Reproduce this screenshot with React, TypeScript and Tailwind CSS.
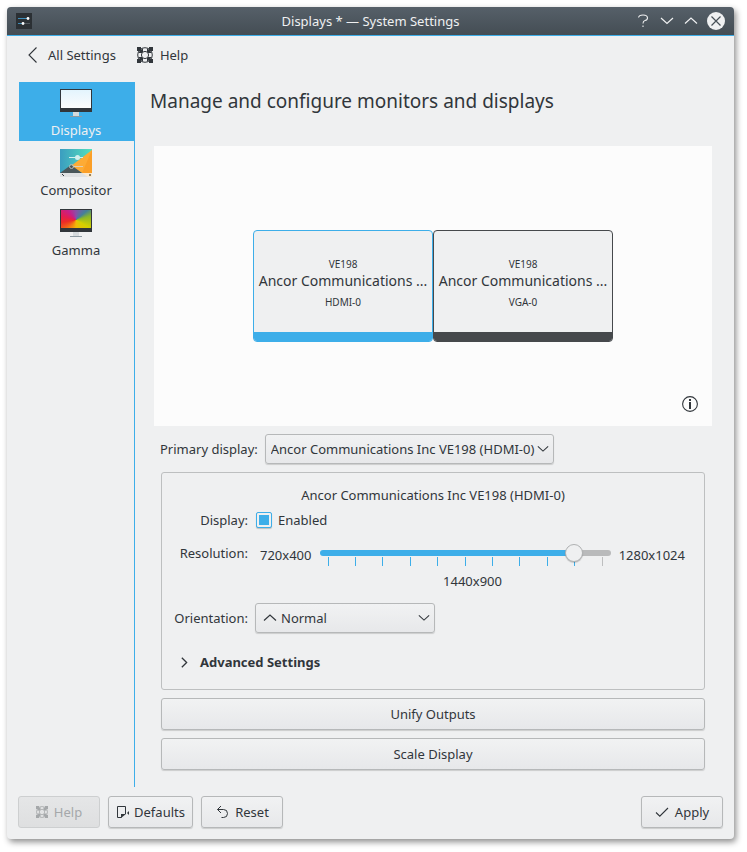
import { useState, type CSSProperties, type ReactNode } from 'react';

type IconProps = {
  className?: string;
};

const chevronPaths = {
  up: 'M1 9.5 L7 4 L13 9.5',
  down: 'M1 4 L7 9.5 L13 4',
  right: 'M4.5 2.5 L9 7 L4.5 11.5',
};

function Chevron({ direction, className }: IconProps & { direction: keyof typeof chevronPaths }) {
  return (
    <svg viewBox="0 0 14 14" fill="none" stroke="currentColor" strokeWidth="1.2" className={className} aria-hidden="true">
      <path d={chevronPaths[direction]} />
    </svg>
  );
}

function BackIcon() {
  return (
    <svg viewBox="0 0 16 16" fill="none" stroke="currentColor" strokeWidth="1.1" className="size-4" aria-hidden="true">
      <path d="M11.5 0.5 L4 8 L11.5 15.5" />
    </svg>
  );
}

function LifebuoyIcon({ className }: IconProps) {
  return (
    <svg viewBox="0 0 16 16" fill="none" stroke="currentColor" className={className} aria-hidden="true">
      <circle cx="8" cy="8" r="7.3" />
      <circle cx="8" cy="8" r="3.6" />
      <path d="M5.5 1.5 V5 M10.5 1.5 V5 M5.5 11 V14.5 M10.5 11 V14.5 M1.5 5.5 H5 M1.5 10.5 H5 M11 5.5 H14.5 M11 10.5 H14.5" />
      <path
        d="M0 0 H4 V2 L5.5 3 V5.5 H3 L2 4 H0 Z M16 0 H12 V2 L10.5 3 V5.5 H13 L14 4 H16 Z M0 16 H4 V14 L5.5 13 V10.5 H3 L2 12 H0 Z M16 16 H12 V14 L10.5 13 V10.5 H13 L14 12 H16 Z"
        fill="currentColor"
        stroke="none"
      />
    </svg>
  );
}

function AppIcon() {
  return (
    <svg viewBox="0 0 16 16" className="size-4" aria-hidden="true">
      <rect width="16" height="16" fill="#2b3034" />
      <path d="M2 5.5 H12" stroke="#3f8fba" />
      <path d="M2 10.5 H7" stroke="#3f8fba" />
      <path d="M7 10.5 H14" stroke="#50585e" />
      <circle cx="12" cy="5.5" r="1.4" fill="#fcfcfc" />
      <circle cx="7" cy="10.5" r="1.4" fill="#fcfcfc" />
    </svg>
  );
}

function MonitorIcon() {
  return (
    <svg viewBox="0 0 32 32" className="size-8" aria-hidden="true">
      <defs>
        <linearGradient id="screen" x1="0" y1="0" x2="0" y2="1">
          <stop offset="0" stopColor="#e3f4fd" />
          <stop offset="1" stopColor="#fcfcfc" />
        </linearGradient>
      </defs>
      <rect y="3" width="32" height="23" fill="#31363b" />
      <rect x="1" y="4" width="30" height="18" fill="url(#screen)" />
      <rect x="13" y="26" width="6" height="4" fill="#d5dadd" />
      <rect x="10" y="30" width="12" height="1" fill="#8d9aa2" />
    </svg>
  );
}

function CompositorIcon() {
  return (
    <svg viewBox="0 0 32 32" className="size-8" aria-hidden="true">
      <defs>
        <linearGradient id="teal" x1="0" y1="0" x2="1" y2="0">
          <stop offset="0" stopColor="#3b9dc0" />
          <stop offset="1" stopColor="#53e0bd" />
        </linearGradient>
      </defs>
      <rect y="3" width="32" height="24" fill="url(#teal)" />
      <path d="M32 4 L11 20 L22 27 H32 Z" fill="#fdab35" />
      <path d="M32 4 L22 27 H32 Z" fill="#fb9f27" />
      <path d="M0 27 L11 19 L22 27 Z" fill="#4a575b" />
      <rect y="27" width="32" height="4" fill="#dfe1e3" />
      <path d="M22 27 H32 V31 H28 Z" fill="#fbe9d0" />
      <path d="M2 28 L4 30" stroke="#31363b" />
      <rect x="29" y="28" width="2" height="2" fill="#8f8265" />
      <path d="M9 11.5 H23" stroke="#d3f0ee" />
      <circle cx="17.5" cy="11.5" r="2.5" fill="#d3f0ee" />
      <path d="M13 20.5 H23" stroke="#dfcfb6" />
      <circle cx="11.5" cy="20.5" r="2" fill="none" stroke="#b6bcb8" />
    </svg>
  );
}

function GammaIcon() {
  return (
    <svg viewBox="0 0 32 32" className="size-8" aria-hidden="true">
      <rect y="3" width="32" height="23" fill="#31363b" />
      <foreignObject x="1" y="4" width="30" height="18">
        <div className="h-[18px] w-[30px] bg-[conic-gradient(from_0deg_at_50%_55%,#8a4fa8,#447f9a_50deg,#8ab62b_75deg,#d4cf00_120deg,#f1ba08_180deg,#f37d12_220deg,#ec2c26_260deg,#e51c50_285deg,#c4208c_320deg,#8a4fa8)]" />
      </foreignObject>
      <rect x="13" y="26" width="6" height="4" fill="#d5dadd" />
      <rect x="10" y="30" width="12" height="1" fill="#8d9aa2" />
    </svg>
  );
}

function InfoIcon() {
  return (
    <svg viewBox="0 0 16 16" className="size-4" aria-hidden="true">
      <circle cx="8" cy="8" r="7.4" fill="none" stroke="currentColor" strokeWidth="1.1" />
      <rect x="7" y="3" width="2" height="2" fill="currentColor" />
      <rect x="7" y="6" width="2" height="7" fill="currentColor" />
    </svg>
  );
}

function DefaultsIcon() {
  return (
    <svg viewBox="0 0 14 14" fill="none" stroke="currentColor" className="size-3.5" aria-hidden="true">
      <path d="M5.5 12.5 H1.5 V1.5 H9.5 V9" />
      <path d="M5 13 V9 H10 Z" fill="currentColor" stroke="none" />
      <path d="M13 6 V10 L11 8 Z" fill="currentColor" stroke="none" />
    </svg>
  );
}

function ResetIcon() {
  return (
    <svg viewBox="0 0 14 14" fill="none" stroke="currentColor" className="size-3.5" aria-hidden="true">
      <path d="M6 1 L2.5 4.5 L6 8" />
      <path d="M2.5 4.5 H8.5 A4 4 0 0 1 8.5 12.5 H6.5" />
    </svg>
  );
}

function CheckIcon() {
  return (
    <svg viewBox="0 0 14 14" fill="none" stroke="currentColor" strokeWidth="1.1" className="size-3.5" aria-hidden="true">
      <path d="M1 7.5 L4.8 11.2 L13 3" />
    </svg>
  );
}

type PushButtonProps = {
  children: ReactNode;
  className?: string;
  disabled?: boolean;
};

function PushButton({ children, className = '', disabled }: PushButtonProps) {
  return (
    <button
      type="button"
      disabled={disabled}
      className={`flex h-8 items-center justify-center rounded-[3px] border border-[#b6b8b9] bg-linear-to-b from-[#f1f2f3] to-[#e7e8ea] shadow-[0_1px_1px_rgba(0,0,0,0.15)] disabled:border-[#cdcfd0] disabled:from-[#e5e6e7] disabled:to-[#dedfe0] disabled:text-[#a5a8aa] disabled:shadow-none ${className}`}
    >
      {children}
    </button>
  );
}

const selectClass =
  'h-[30px] w-full appearance-none rounded-[3px] border border-[#b6b8b9] bg-linear-to-b from-[#f1f2f3] to-[#e7e8ea] shadow-[0_1px_1px_rgba(0,0,0,0.15)]';

const modules = [
  { name: 'Displays', icon: <MonitorIcon /> },
  { name: 'Compositor', icon: <CompositorIcon /> },
  { name: 'Gamma', icon: <GammaIcon /> },
];

const outputs = [
  { model: 'VE198', vendor: 'Ancor Communications ...', port: 'HDMI-0', style: 'border-[#3daee9]', base: 'bg-[#3daee9]' },
  { model: 'VE198', vendor: 'Ancor Communications ...', port: 'VGA-0', style: 'border-[#46494c]', base: 'bg-[#46494c]' },
];

const resolutionSteps = 10;

function TitleBar() {
  return (
    <header className="grid h-[29px] grid-cols-[1fr_auto_1fr] items-center border-b border-[#3daee9] bg-linear-to-b from-[#566069] to-[#444d54] px-[9px] text-[#eff0f1]">
      <AppIcon />
      <h1>Displays * — System Settings</h1>
      <div className="flex items-center justify-end gap-2">
        <button type="button" aria-label="What's this" className="flex size-4 items-center justify-center">
          <svg viewBox="0 0 14 14" fill="none" stroke="currentColor" strokeWidth="1.1" className="size-3.5">
            <path d="M2.5 3.5 Q3 1 7 1 Q11.5 1 11.5 4 Q11.5 6 9 6.5 Q7 7 7 9.5 M7 11.5 V13" />
          </svg>
        </button>
        <button type="button" aria-label="Minimize" className="flex size-4 items-center justify-center">
          <Chevron direction="down" className="size-3.5" />
        </button>
        <button type="button" aria-label="Maximize" className="flex size-4 items-center justify-center">
          <Chevron direction="up" className="size-3.5" />
        </button>
        <button type="button" aria-label="Close" className="flex size-[18px] items-center justify-center rounded-full bg-[#eff0f1] text-[#475057]">
          <svg viewBox="0 0 10 10" fill="none" stroke="currentColor" strokeWidth="1.2" className="size-2.5">
            <path d="M0.5 0.5 L9.5 9.5 M9.5 0.5 L0.5 9.5" />
          </svg>
        </button>
      </div>
    </header>
  );
}

function Sidebar() {
  return (
    <nav className="w-[116px] shrink-0 border-r border-[#3daee9]">
      {modules.map((module, index) => (
        <a
          key={module.name}
          href="#"
          className={`mb-px flex h-[59px] flex-col items-center pt-1 pr-px ${index === 0 ? 'bg-[#3daee9] text-[#eff0f1]' : ''}`}
        >
          {module.icon}
          <span className="mt-0.5">{module.name}</span>
        </a>
      ))}
    </nav>
  );
}

function OutputPreview() {
  return (
    <div className="relative flex h-[280px] items-center justify-center bg-[#fcfcfc]">
      {outputs.map((output) => (
        <div key={output.port} className={`flex h-28 w-[180px] flex-col overflow-hidden rounded-[4px] border bg-[#eff0f1] text-center ${output.style}`}>
          <div className="flex flex-1 flex-col justify-center pt-0.5">
            <p className="text-[10px] leading-4">{output.model}</p>
            <p className="text-[14px] leading-[18px] whitespace-nowrap">{output.vendor}</p>
            <p className="mt-1 text-[10px] leading-4">{output.port}</p>
          </div>
          <div className={`h-[9px] ${output.base}`} />
        </div>
      ))}
      <button type="button" aria-label="Identify outputs" className="absolute right-[14px] bottom-[14px]">
        <InfoIcon />
      </button>
    </div>
  );
}

function ResolutionSlider() {
  const [step, setStep] = useState(9);

  return (
    <div className="relative h-[18px] flex-1">
      <div className="absolute inset-x-2 top-[13px] flex justify-between">
        {Array.from({ length: resolutionSteps + 1 }, (_, index) => (
          <span key={index} className={`h-[9px] w-px ${index <= step ? 'bg-[#3daee9]' : 'bg-[#bdbebf]'}`} />
        ))}
      </div>
      <input
        id="resolution"
        type="range"
        min={0}
        max={resolutionSteps}
        value={step}
        onChange={(event) => setStep(Number(event.target.value))}
        style={{ '--fill': `${(step / resolutionSteps) * 100}%` } as CSSProperties}
        className="relative block h-[18px] w-full appearance-none bg-transparent [&::-webkit-slider-runnable-track]:h-[6px] [&::-webkit-slider-runnable-track]:rounded-full [&::-webkit-slider-runnable-track]:bg-[linear-gradient(to_right,#3daee9_var(--fill),#b9babb_var(--fill))] [&::-webkit-slider-thumb]:-mt-[6px] [&::-webkit-slider-thumb]:size-[18px] [&::-webkit-slider-thumb]:appearance-none [&::-webkit-slider-thumb]:rounded-full [&::-webkit-slider-thumb]:border [&::-webkit-slider-thumb]:border-[#b0b2b3] [&::-webkit-slider-thumb]:bg-[#eff0f1] [&::-webkit-slider-thumb]:shadow-[0_1px_1px_rgba(0,0,0,0.2)]"
      />
    </div>
  );
}

function OutputSettings() {
  return (
    <section className="rounded-[3px] border border-[#bdbfc0] pt-3 pr-[19px] pb-[17px]">
      <h3 className="pl-[19px] text-center">Ancor Communications Inc VE198 (HDMI-0)</h3>
      <div className="grid grid-cols-[86px_1fr] gap-x-[7px]">
        <label htmlFor="enabled" className="flex h-[30px] items-center justify-end">Display:</label>
        <div className="flex items-center gap-1.5 pl-px">
          <input
            id="enabled"
            type="checkbox"
            defaultChecked
            className="size-4 appearance-none rounded-[2px] border border-[#3daee9] p-0.5 shadow-[0_1px_1px_rgba(0,0,0,0.2)] checked:bg-[#3daee9] checked:bg-clip-content"
          />
          <label htmlFor="enabled">Enabled</label>
        </div>

        <label htmlFor="resolution" className="flex h-9 items-center justify-end">Resolution:</label>
        <div className="flex items-center gap-2 pl-[5px]">
          <span className="pt-1">720x400</span>
          <ResolutionSlider />
          <span className="pt-1">1280x1024</span>
        </div>
        <output htmlFor="resolution" className="col-start-2 pl-[5px] text-center">1440x900</output>

        <label htmlFor="orientation" className="mt-3 flex h-[30px] items-center justify-end">Orientation:</label>
        <div className="relative mt-3 w-[180px]">
          <select id="orientation" className={`${selectClass} pr-6 pl-[25px]`}>
            <option>Normal</option>
          </select>
          <Chevron direction="up" className="pointer-events-none absolute top-2 left-2 size-3.5" />
          <Chevron direction="down" className="pointer-events-none absolute top-[9px] right-[5px] size-3" />
        </div>
      </div>
      <button type="button" className="mt-[19px] flex items-center gap-2 pl-[15px] font-bold">
        <Chevron direction="right" className="size-[15px]" />
        Advanced Settings
      </button>
    </section>
  );
}

export default function App() {
  return (
    <div className="flex min-h-screen bg-white pt-[7px] pr-[13px] pb-[13px] pl-[7px] font-['Noto_Sans',sans-serif] text-[13px] leading-5 text-[#31363b]">
      <div className="flex min-w-0 flex-1 flex-col overflow-hidden rounded-[4px] bg-[#eff0f1] shadow-[2px_3px_6px_0px_rgba(0,0,0,0.45)]">
        <TitleBar />

        <div className="flex h-[38px] items-center gap-[21px] pl-[18px]">
          <button type="button" className="flex items-center gap-[7px]">
            <BackIcon />
            All Settings
          </button>
          <button type="button" className="flex items-center gap-[7px]">
            <LifebuoyIcon className="size-4" />
            Help
          </button>
        </div>

        <div className="mt-2 flex flex-1 pl-3">
          <Sidebar />
          <main className="min-w-0 flex-1 pr-[22px] pb-4 pl-[15px]">
            <h2 className="h-16 text-[19px] leading-[38px]">Manage and configure monitors and displays</h2>
            <div className="pl-1">
              <OutputPreview />
              <div className="mt-2 space-y-2 px-[7px]">
                <div className="-ml-px flex items-center gap-[7px]">
                  <label htmlFor="primary">Primary display:</label>
                  <div className="relative w-[289px]">
                    <select id="primary" className={`${selectClass} pr-4 pl-[5px]`}>
                      <option>Ancor Communications Inc VE198 (HDMI-0)</option>
                      <option>Ancor Communications Inc VE198 (VGA-0)</option>
                    </select>
                    <Chevron direction="down" className="pointer-events-none absolute top-[9px] right-[5px] size-3" />
                  </div>
                </div>
                <OutputSettings />
                <PushButton className="w-full">Unify Outputs</PushButton>
                <PushButton className="w-full">Scale Display</PushButton>
              </div>
            </div>
          </main>
        </div>

        <footer className="flex gap-2 pt-[9px] pr-[11px] pb-[11px] pl-[11px]">
          <PushButton disabled className="w-[82px] gap-1.5">
            <LifebuoyIcon className="size-3" />
            Help
          </PushButton>
          <PushButton className="w-[85px] gap-1">
            <DefaultsIcon />
            Defaults
          </PushButton>
          <PushButton className="w-[82px] gap-1.5">
            <ResetIcon />
            Reset
          </PushButton>
          <PushButton className="ml-auto w-[82px] gap-1.5">
            <CheckIcon />
            Apply
          </PushButton>
        </footer>
      </div>
    </div>
  );
}
